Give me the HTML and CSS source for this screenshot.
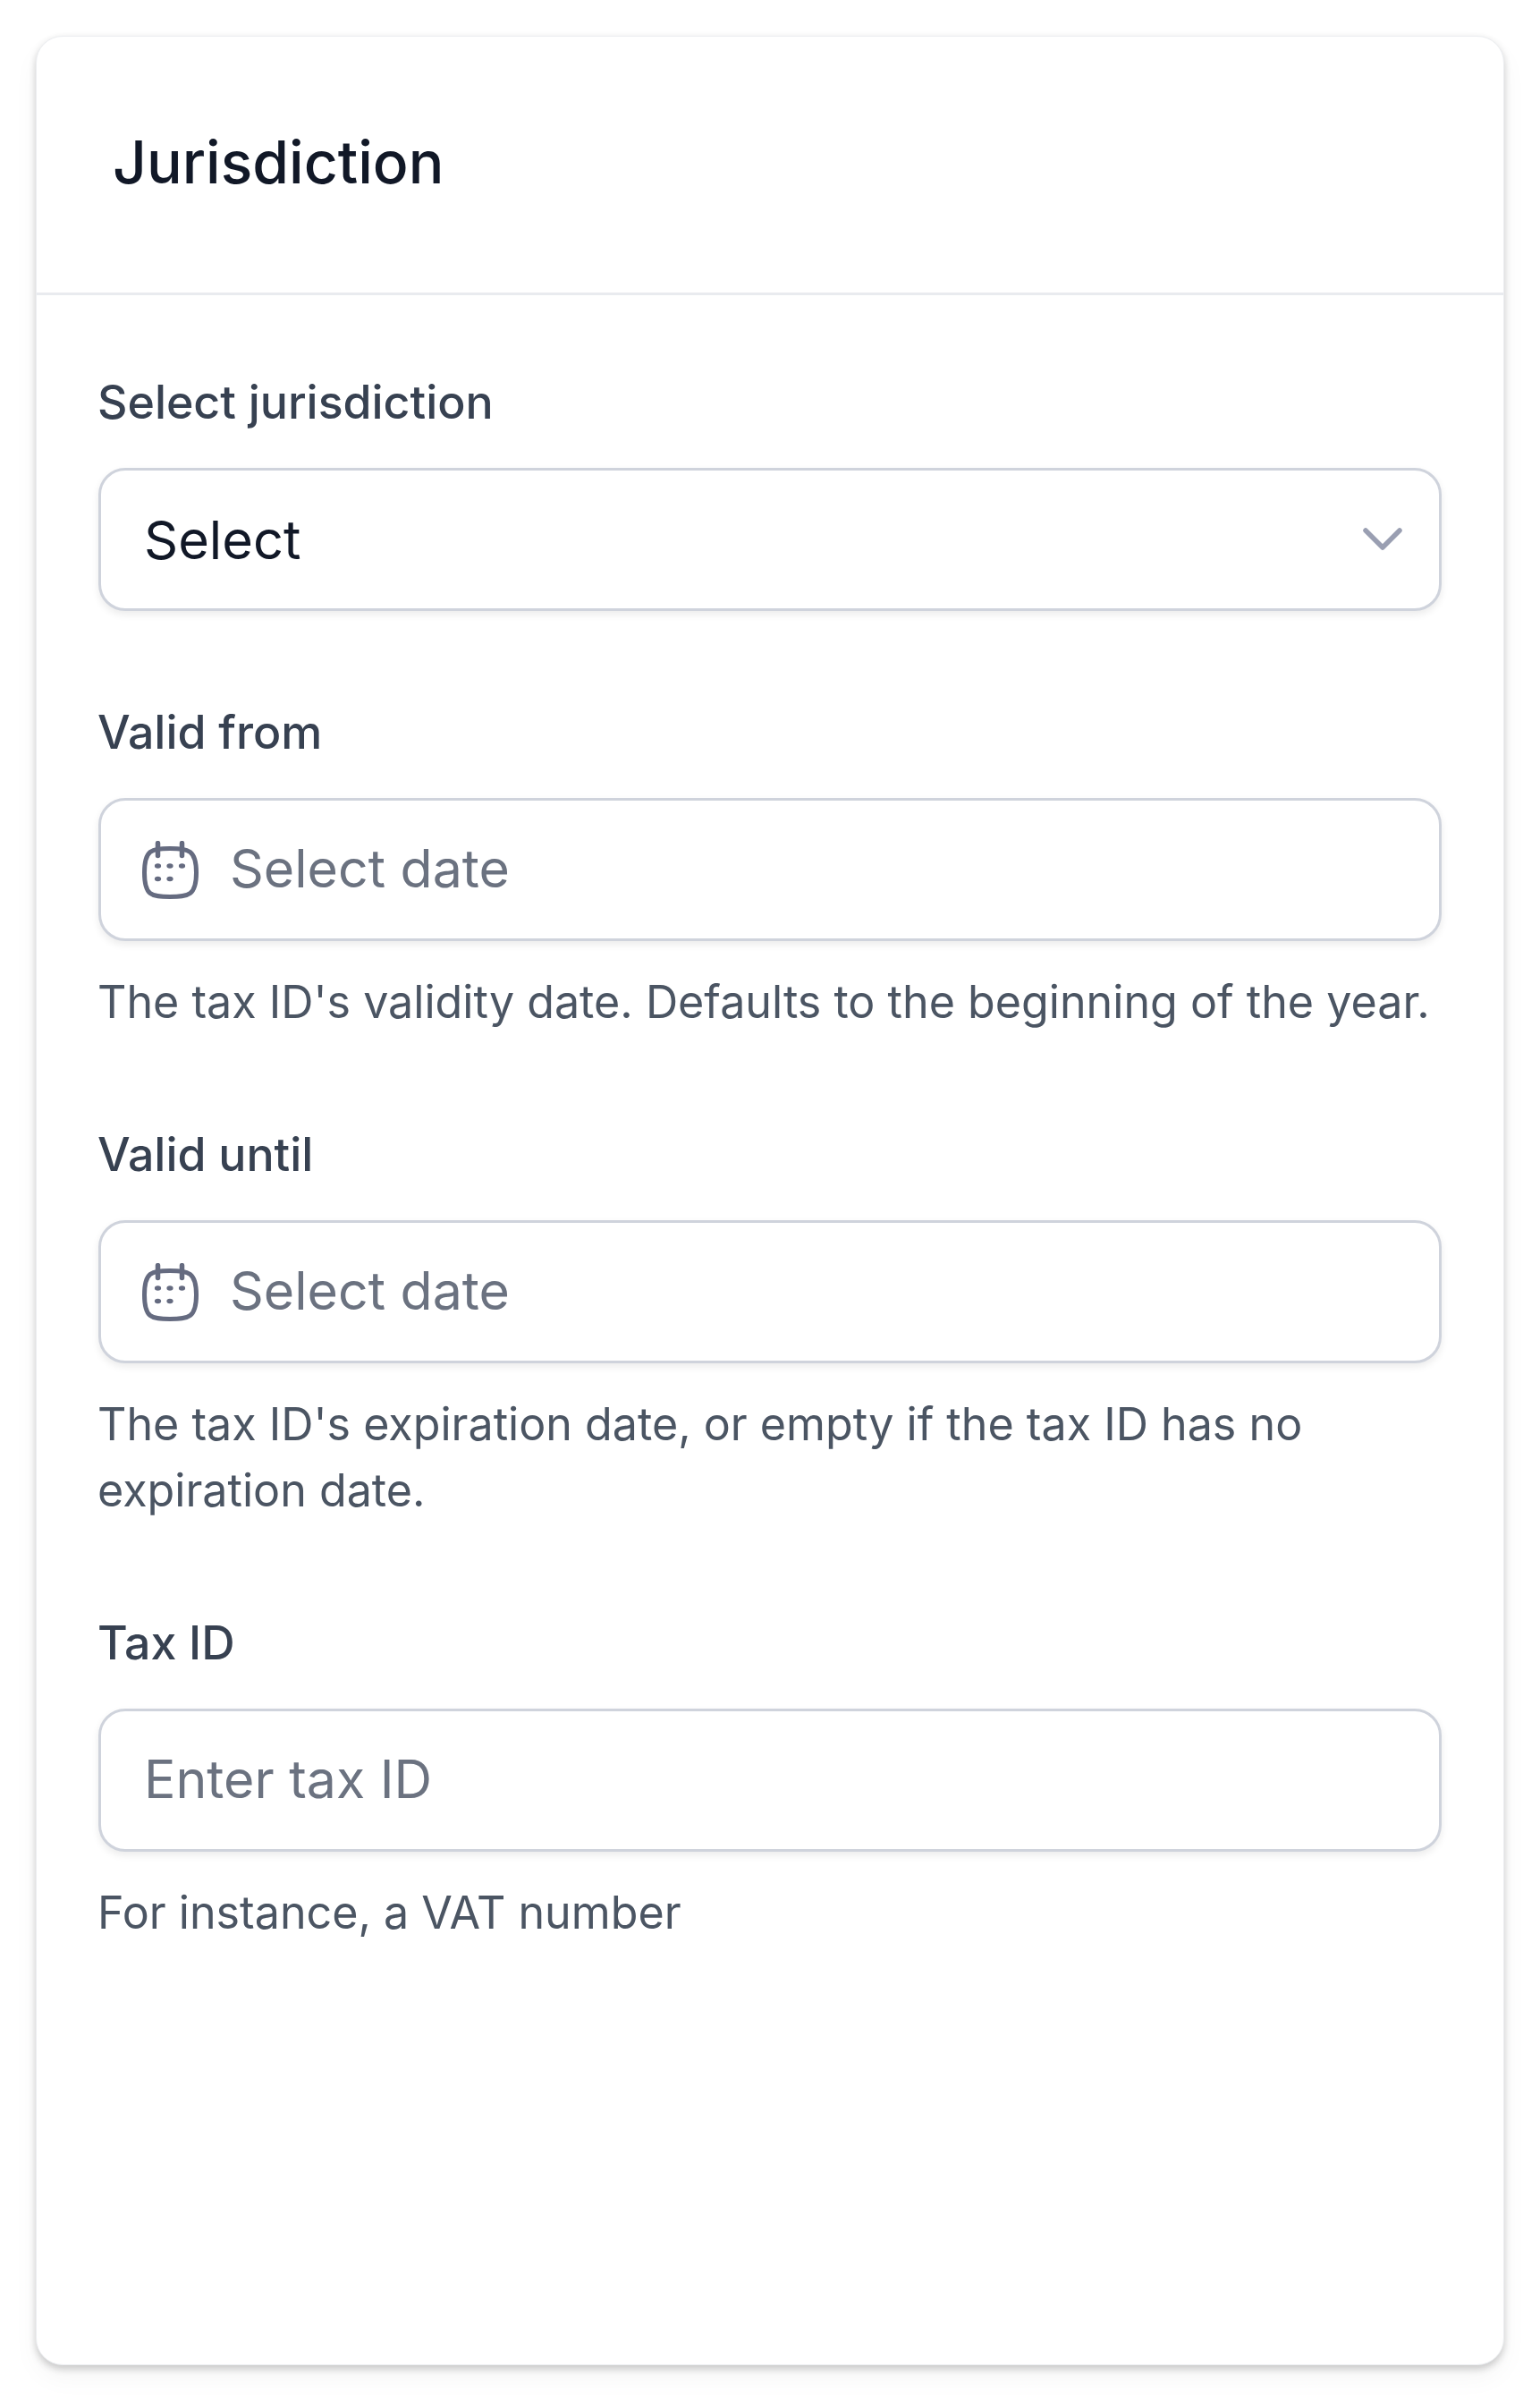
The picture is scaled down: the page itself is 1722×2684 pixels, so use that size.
FILE: index.html
```html
<!DOCTYPE html>
<html lang="en">
<head>
    <meta charset="UTF-8">
    <title>Jurisdiction</title>
    <link rel="stylesheet" href="styles.css">
</head>
<body>
    <div class="card">
        <div class="card-header">
            <h2 class="card-title">Jurisdiction</h2>
        </div>
        <div class="card-body">
            <div class="field field-select">
                <label class="field-label">Select jurisdiction</label>
                <div class="control control-select">
                    <span class="control-value">Select</span>
                    <svg class="chevron" viewBox="0 0 44 26" fill="none" stroke="currentColor" stroke-width="5.500" stroke-linecap="round" stroke-linejoin="round"><path d="M3 3l19 19L41 3"/></svg>
                </div>
            </div>

            <div class="field">
                <label class="field-label">Valid from</label>
                <div class="control">
                    <svg class="calendar" viewBox="0 0 63 65" fill="none" stroke="currentColor" stroke-width="5" stroke-linecap="round"><path d="M17.500 2.500v14M44.500 2.500v14" stroke-width="5.500"/><path d="M31 8.500C52 8.500 60.500 10 60.500 35.500 60.500 61 52 62.500 31 62.500 10 62.500 2.500 61 2.500 35.500 2.500 10 10 8.500 31 8.500z"/><g fill="currentColor" stroke="none"><ellipse cx="17.500" cy="28" rx="3.600" ry="2.700"/><ellipse cx="31" cy="28" rx="3.600" ry="2.700"/><ellipse cx="44.500" cy="28" rx="3.600" ry="2.700"/><ellipse cx="17.500" cy="42.500" rx="3.600" ry="2.700"/><ellipse cx="31" cy="42.500" rx="3.600" ry="2.700"/></g></svg>
                    <span class="control-placeholder">Select date</span>
                </div>
                <p class="field-help">The tax ID's validity date. Defaults to the beginning of the year.</p>
            </div>

            <div class="field">
                <label class="field-label">Valid until</label>
                <div class="control">
                    <svg class="calendar" viewBox="0 0 63 65" fill="none" stroke="currentColor" stroke-width="5" stroke-linecap="round"><path d="M17.500 2.500v14M44.500 2.500v14" stroke-width="5.500"/><path d="M31 8.500C52 8.500 60.500 10 60.500 35.500 60.500 61 52 62.500 31 62.500 10 62.500 2.500 61 2.500 35.500 2.500 10 10 8.500 31 8.500z"/><g fill="currentColor" stroke="none"><ellipse cx="17.500" cy="28" rx="3.600" ry="2.700"/><ellipse cx="31" cy="28" rx="3.600" ry="2.700"/><ellipse cx="44.500" cy="28" rx="3.600" ry="2.700"/><ellipse cx="17.500" cy="42.500" rx="3.600" ry="2.700"/><ellipse cx="31" cy="42.500" rx="3.600" ry="2.700"/></g></svg>
                    <span class="control-placeholder">Select date</span>
                </div>
                <p class="field-help">The tax ID's expiration date, or empty if the tax ID has no expiration date.</p>
            </div>

            <div class="field">
                <label class="field-label">Tax ID</label>
                <div class="control">
                    <span class="control-placeholder">Enter tax ID</span>
                </div>
                <p class="field-help">For instance, a VAT number</p>
            </div>
        </div>
    </div>
</body>
</html>
```

FILE: styles.css
```css
* {
    margin: 0;
    padding: 0;
    box-sizing: border-box;
}

body {
    background: #fff;
    font-family: 'Inter', sans-serif;
    padding: 40px;
    height: 2684px;
}

.card {
    height: 2604px;
    background: #fff;
    border-radius: 30px;
    border: 1px solid #eceef1;
    box-shadow: 0 4px 8px rgba(0, 0, 0, 0.2), 0 14px 30px rgba(0, 0, 0, 0.04);
}

.card-header {
    height: 289px;
    padding: 0 0 7px 85px;
    display: flex;
    align-items: center;
    border-bottom: 3px solid #e9ebef;
}

.card-title {
    font-size: 66px;
    line-height: 1;
    font-weight: 500;
    color: #111827;
}

.card-body {
    padding: 82px 69px;
    display: flex;
    flex-direction: column;
    gap: 96px;
}

.field-select {
    margin-bottom: 2px;
}

.field-label {
    display: block;
    margin-left: -1px;
    margin-bottom: 37px;
    font-size: 51.800px;
    line-height: 74px;
    font-weight: 500;
    color: #374151;
}

.control {
    height: 160px;
    display: flex;
    align-items: center;
    padding: 0 41px 0 48px;
    gap: 36px;
    background: #fff;
    border: 3px solid #cfd3dc;
    border-radius: 30px;
    box-shadow: 0 4px 8px rgba(0, 0, 0, 0.08);
    font-size: 59.500px;
}

.control-select {
    justify-content: space-between;
}

.control-value {
    color: #111827;
}

.control-placeholder {
    color: #6b7280;
    font-size: 59px;
    padding-bottom: 4px;
}

.chevron {
    width: 44px;
    height: 26px;
    color: #9a9fb2;
}

.calendar {
    width: 63px;
    height: 65px;
    color: #656b80;
    margin-left: -2px;
    margin-right: -1px;
}

.field-help {
    margin-left: -1px;
    margin-top: 31px;
    font-size: 50.200px;
    line-height: 74px;
    color: #4b5563;
}
```
